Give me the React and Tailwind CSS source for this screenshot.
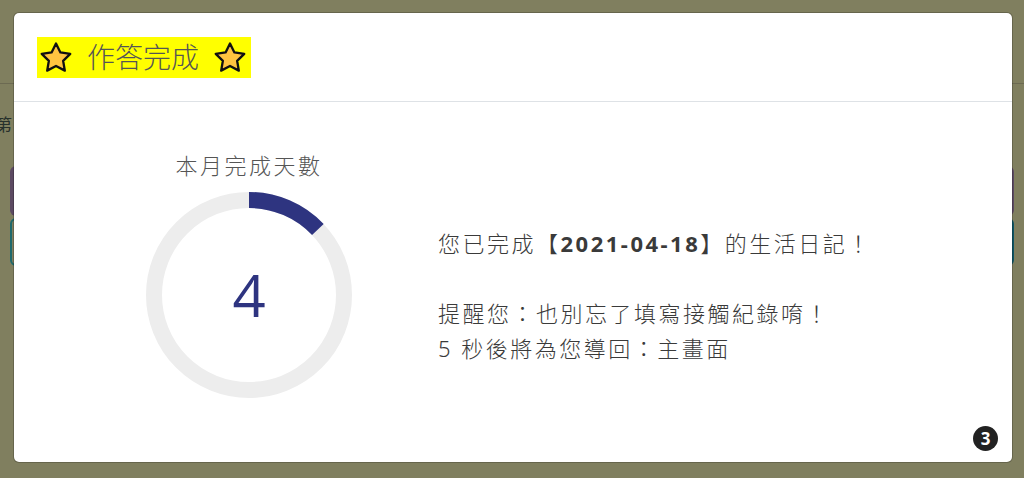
import React from "react";

const FONT = { fontFamily: '"Noto Sans", "Noto Sans CJK TC", sans-serif' };

// orange star with dark outline, like the emoji in the header
const Star = () => (
  <svg width="32" height="31" viewBox="0 0 32 31" className="shrink-0 overflow-visible">
    <path
      d="M16 1.5 L20.41 10.43 L30.27 11.86 L23.13 18.82 L24.82 28.64 L16 24 L7.18 28.64 L8.87 18.82 L1.73 11.86 L11.59 10.43 Z"
      fill="#ffc440"
      stroke="#111"
      strokeWidth="2.3"
      strokeLinejoin="round"
    />
  </svg>
);

const Ring = ({ value = 4, total = 31 }) => {
  const r = 95;
  const c = 103;
  const angle = (value / total) * 2 * Math.PI;
  const x = c + r * Math.sin(angle);
  const y = c - r * Math.cos(angle);
  return (
    <div className="relative w-[206px] h-[206px]">
      <svg width="206" height="206" viewBox="0 0 206 206">
        <circle cx={c} cy={c} r={r} fill="none" stroke="#ededed" strokeWidth="16" />
        <path
          d={`M${c} ${c - r} A${r} ${r} 0 0 1 ${x} ${y}`}
          fill="none"
          stroke="#2e3480"
          strokeWidth="16"
        />
      </svg>
      <div
        className="absolute inset-0 flex items-center justify-center text-[58px] font-normal text-[#2e3480] leading-none"
        style={{ fontFamily: '"Open Sans", "Noto Sans", sans-serif' }}
      >
        {value}
      </div>
    </div>
  );
};

export default function App() {
  return (
    <div className="relative w-[1024px] h-[478px] overflow-hidden bg-[#807f5f]" style={FONT}>
      {/* page behind the backdrop */}
      <div className="h-[84px] border-b border-[#6c6a52]" />
      <div className="mt-[32px] -ml-[5px] text-[17px] leading-none text-[#27302c]">第</div>
      <div className="mt-[33px] mx-[10px] flex flex-col gap-[2px]">
        <div className="h-[50px] rounded-[6px] bg-[#5c4a62]" />
        <div className="grid grid-cols-2 gap-[8px]">
          <div className="h-[48px] rounded-[6px] border-2 border-[#1f696c]" />
          <div className="h-[48px] rounded-[6px] bg-[#0e5463]" />
        </div>
      </div>

      {/* modal */}
      <div className="absolute left-[13px] top-[12px] w-[1000px] h-[451px] bg-white rounded-[6px] border border-black/20 bg-clip-padding">
        <div className="h-[89px] border-b border-[#dee2e6] flex items-center pl-[23px]">
          <div className="h-[41px] bg-[#ffff00] flex items-center pl-[3px] pr-[5px]">
            <Star />
            <span className="ml-[15px] mr-[15px] text-[28px] font-light leading-none text-[#555]">作答完成</span>
            <Star />
          </div>
        </div>

        <div className="flex items-start pt-[48px] pl-[132px]">
          <div className="flex flex-col items-center w-[206px]">
            <div className="h-[42px] text-[22px] font-light tracking-[2.5px] leading-[30px] text-[#555]">本月完成天數</div>
            <Ring value={4} total={31} />
          </div>
          <div className="ml-[86px] mt-[76px] text-[22px] font-light leading-[35px] tracking-[2.5px] text-[#3a3a3a]">
            <p>
              您已完成【<span className="font-bold">2021-04-18</span>】的生活日記！
            </p>
            <p>&nbsp;</p>
            <p>提醒您：也別忘了填寫接觸紀錄唷！</p>
            <p>5 秒後將為您導回：主畫面</p>
          </div>
        </div>

        <div className="absolute right-[14px] bottom-[11px] w-[25px] h-[25px] rounded-full bg-[#222] text-white text-[17px] font-bold leading-none flex items-center justify-center">
          3
        </div>
      </div>
    </div>
  );
}
